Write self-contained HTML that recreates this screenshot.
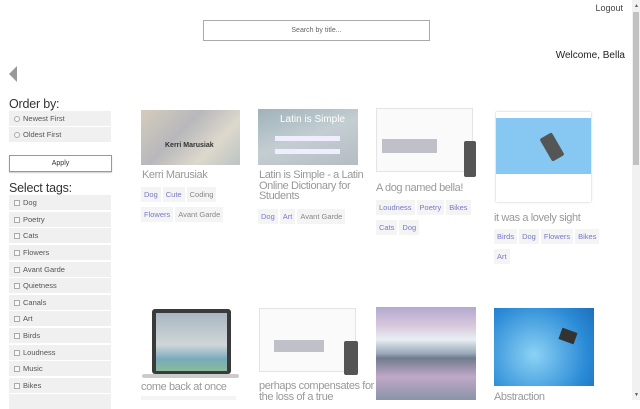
<!DOCTYPE html>
<html><head><style>
*{margin:0;padding:0;box-sizing:border-box}
body{width:640px;height:400px;overflow:hidden;background:#fff;font-family:"Liberation Sans",sans-serif;position:relative;color:#333}
.a{position:absolute}
.logout{right:17px;top:3px;font-size:9px;color:#444}
.search{left:203px;top:20px;width:227px;height:21px;border:1px solid #aaa;font-size:7px;color:#666;text-align:center;line-height:19px}
.welcome{right:15px;top:50px;font-size:10px;color:#222}
.sb{left:632px;top:0;width:8px;height:400px;background:#f1f1f1}
.thumb{left:633px;top:12px;width:6px;height:153px;background:#c1c1c1}
.h{font-size:12.5px;color:#333;left:9px;letter-spacing:-0.2px}
.it{left:9px;width:102px;height:15px;background:#f0f0f0;font-size:7.5px;color:#555;line-height:15px;padding-left:5px}
.it i{display:inline-block;width:6px;height:6px;border:1px solid #aaa;margin-right:3px;vertical-align:-1px;background:#f8f8f8}
.it i.r{border-radius:50%}
.btn{left:9px;top:155px;width:103px;height:17px;border:1px solid #999;font-size:7px;text-align:center;line-height:15px;color:#333;box-shadow:0 1px 1px #ccc}
.img{position:absolute}
.t{position:absolute;font-size:11px;color:#999;line-height:10.7px;width:110px;letter-spacing:-0.4px}
.tags{position:absolute;width:110px}
.tg{display:inline-block;background:#f4f4f4;font-size:7.5px;height:15px;line-height:15px;padding:0 3px;margin:0 2px 2px 0;color:#7878c8}
.tg.g{color:#888}
</style></head><body>
<div class="a logout">Logout</div>
<div class="a search">Search by title...</div>
<div class="a welcome">Welcome, Bella</div>
<svg class="a" style="left:9px;top:66px" width="9" height="16"><polygon points="8,0 8,16 0,8" fill="#999"/></svg>
<div class="a sb"></div><div class="a thumb"></div>
<div class="a" style="left:634px;top:3px;font-size:5px;color:#555">▲</div>
<div class="a" style="left:634px;top:392px;font-size:5px;color:#555">▼</div>

<div class="a h" style="top:97px">Order by:</div>
<div class="a it" style="top:111px"><i class="r"></i>Newest First</div>
<div class="a it" style="top:127px"><i class="r"></i>Oldest First</div>
<div class="a btn">Apply</div>
<div class="a h" style="top:181px">Select tags:</div>
<div class="a it" style="top:195px"><i></i>Dog</div>
<div class="a it" style="top:212px"><i></i>Poetry</div>
<div class="a it" style="top:228px"><i></i>Cats</div>
<div class="a it" style="top:245px"><i></i>Flowers</div>
<div class="a it" style="top:262px"><i></i>Avant Garde</div>
<div class="a it" style="top:278px"><i></i>Quietness</div>
<div class="a it" style="top:295px"><i></i>Canals</div>
<div class="a it" style="top:311px"><i></i>Art</div>
<div class="a it" style="top:328px"><i></i>Birds</div>
<div class="a it" style="top:345px"><i></i>Loudness</div>
<div class="a it" style="top:361px"><i></i>Music</div>
<div class="a it" style="top:378px"><i></i>Bikes</div>
<div class="a it" style="top:394px"></div>

<!-- row 1 -->
<div class="img" style="left:141px;top:110px;width:99px;height:55px;background:linear-gradient(135deg,#d4ccbc,#b8b8bc 40%,#ddd8cc 70%,#bcc4c4)"></div>
<div class="a" style="left:165px;top:142px;font-size:7px;font-weight:bold;color:#333">Kerri Marusiak</div>
<div class="t" style="left:142px;top:170px">Kerri Marusiak</div>
<div class="tags" style="left:141px;top:184px"><span class="tg">Dog</span><span class="tg">Cute</span><span class="tg g">Coding</span><span class="tg">Flowers</span><span class="tg g">Avant Garde</span></div>

<div class="img" style="left:258px;top:109px;width:100px;height:56px;background:linear-gradient(160deg,#9fb2ba,#c4ced2 50%,#b4bec2)"></div>
<div class="a" style="left:280px;top:114px;font-size:10px;color:#fff">Latin is Simple</div>
<div class="a" style="left:275px;top:136px;width:65px;height:5px;background:#eef"></div>
<div class="a" style="left:275px;top:149px;width:65px;height:5px;background:#eef"></div>
<div class="t" style="left:259px;top:170px;width:115px">Latin is Simple - a Latin Online Dictionary for Students</div>
<div class="tags" style="left:258px;top:206px"><span class="tg">Dog</span><span class="tg">Art</span><span class="tg g">Avant Garde</span></div>

<div class="img" style="left:376px;top:108px;width:97px;height:64px;background:#fafafa;border:1px solid #e4e4e4"></div>
<div class="a" style="left:382px;top:139px;width:55px;height:14px;background:#c0c0c8"></div>
<div class="a" style="left:464px;top:141px;width:12px;height:36px;background:#555;border-radius:2px"></div>
<div class="t" style="left:376px;top:183px">A dog named bella!</div>
<div class="tags" style="left:376px;top:197px"><span class="tg">Loudness</span><span class="tg">Poetry</span><span class="tg">Bikes</span><span class="tg">Cats</span><span class="tg">Dog</span></div>

<div class="img" style="left:496px;top:112px;width:95px;height:90px;background:#fff;box-shadow:0 0 2px #bbb"></div>
<div class="a" style="left:496px;top:118px;width:95px;height:56px;background:#86c8f2"></div>
<div class="a" style="left:545px;top:134px;width:14px;height:26px;background:#555;border-radius:2px;transform:rotate(-30deg)"></div>
<div class="t" style="left:494px;top:213px">it was a lovely sight</div>
<div class="tags" style="left:494px;top:226px"><span class="tg">Birds</span><span class="tg">Dog</span><span class="tg">Flowers</span><span class="tg">Bikes</span><span class="tg">Art</span></div>

<!-- row 2 -->
<div class="img" style="left:152px;top:309px;width:79px;height:65px;background:#3a3a3a;border-radius:3px"></div>
<div class="a" style="left:156px;top:313px;width:71px;height:58px;background:linear-gradient(#a9b6c2,#cfd6d8 55%,#7ab 80%,#8b9)"></div>
<div class="a" style="left:142px;top:374px;width:97px;height:4px;background:#ccc;border-radius:2px"></div>
<div class="t" style="left:141px;top:382px">come back at once</div>
<div class="a" style="left:141px;top:396px;width:95px;height:4px;background:#f4f4f4"></div>

<div class="img" style="left:259px;top:308px;width:97px;height:64px;background:#fafafa;border:1px solid #e4e4e4"></div>
<div class="a" style="left:274px;top:340px;width:50px;height:12px;background:#c0c0c8"></div>
<div class="a" style="left:344px;top:341px;width:14px;height:34px;background:#555;border-radius:2px"></div>
<div class="t" style="left:259px;top:381px;width:120px">perhaps compensates for the loss of a true</div>

<div class="img" style="left:376px;top:307px;width:100px;height:93px;background:linear-gradient(#b3a9cf 0%,#d8c8dc 20%,#e8eef3 35%,#9aa8b8 50%,#707c8c 55%,#c0a8c8 75%,#8a94a8)"></div>

<div class="img" style="left:494px;top:308px;width:100px;height:78px;background:radial-gradient(circle at 40% 60%,#8cd2f5,#2a8ad6 70%,#1e6fb8)"></div>
<div class="a" style="left:560px;top:330px;width:16px;height:12px;background:#333;transform:rotate(20deg)"></div>
<div class="t" style="left:494px;top:392px">Abstraction</div>
</body></html>
